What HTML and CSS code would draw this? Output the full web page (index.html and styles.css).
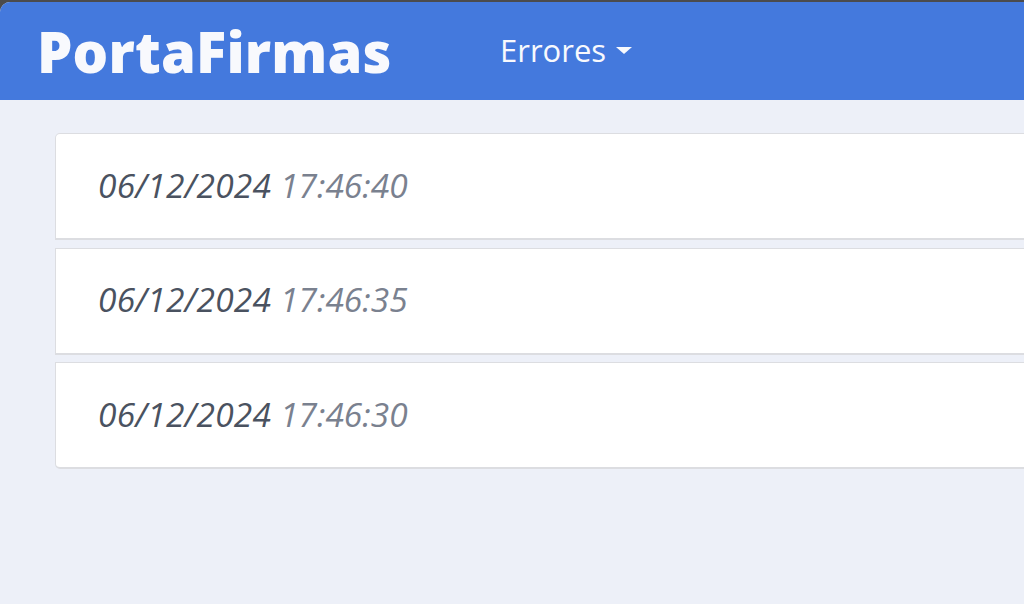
FILE: index.html
```html
<!DOCTYPE html>
<html lang="es">
<head>
<meta charset="utf-8">
<title>PortaFirmas</title>
<link rel="stylesheet" href="styles.css">
</head>
<body>
<div class="frame">
  <div class="app">
    <header class="navbar">
      <div class="brand">PortaFirmas</div>
      <nav class="menu">
        <span class="menu-item">Errores<span class="caret"></span></span>
      </nav>
    </header>
    <main class="content">
      <ul class="list">
        <li class="item"><span class="date">06/12/2024</span> <span class="time">17:46:40</span></li>
        <li class="item"><span class="date">06/12/2024</span> <span class="time">17:46:35</span></li>
        <li class="item"><span class="date">06/12/2024</span> <span class="time">17:46:30</span></li>
      </ul>
    </main>
  </div>
</div>
</body>
</html>
```
FILE: styles.css
```css
html, body {
  margin: 0;
  padding: 0;
  height: 100%;
}
body {
  background: #4b4b4d;
  font-family: "Open Sans", "Lato", sans-serif;
}
.frame {
  padding-top: 2px;
  height: 100%;
  box-sizing: border-box;
}
.app {
  height: 100%;
  background: #edf0f8;
  border-top-left-radius: 10px;
  overflow: hidden;
  display: flex;
  flex-direction: column;
}
.navbar {
  height: 98px;
  background: #4479dd;
  display: flex;
  align-items: center;
  padding-left: 37px;
  flex-shrink: 0;
}
.brand {
  color: #f8f9fd;
  font-weight: 800;
  font-size: 56px;
  letter-spacing: 0.2px;
  width: 463px;
  line-height: 1;
}
.menu-item {
  color: #f8f9fd;
  font-size: 31px;
  display: inline-flex;
  align-items: center;
  line-height: 1;
}
.caret {
  display: inline-block;
  width: 0;
  height: 0;
  border-left: 8px solid transparent;
  border-right: 8px solid transparent;
  border-top: 7px solid #f8f9fd;
  margin-left: 10px;
}
.content {
  padding: 33px 0 0 55px;
}
.list {
  list-style: none;
  margin: 0 -40px 0 0;
  padding: 0;
  display: flex;
  flex-direction: column;
  gap: 7.5px;
}
.item {
  background: #fff;
  border: 1px solid #dcdde1;
  border-bottom-width: 2px;
  height: 107px;
  box-sizing: border-box;
  padding: 0 0 3px 42px;
  display: flex;
  align-items: center;
  font-style: italic;
  font-size: 33.5px;
  letter-spacing: 0.2px;
}
.item:first-child {
  border-top-left-radius: 5px;
}
.item:last-child {
  border-bottom-left-radius: 5px;
}
.date {
  color: #4a5260;
  margin-right: 9px;
}
.time {
  color: #7a818f;
  letter-spacing: 0;
}
```
